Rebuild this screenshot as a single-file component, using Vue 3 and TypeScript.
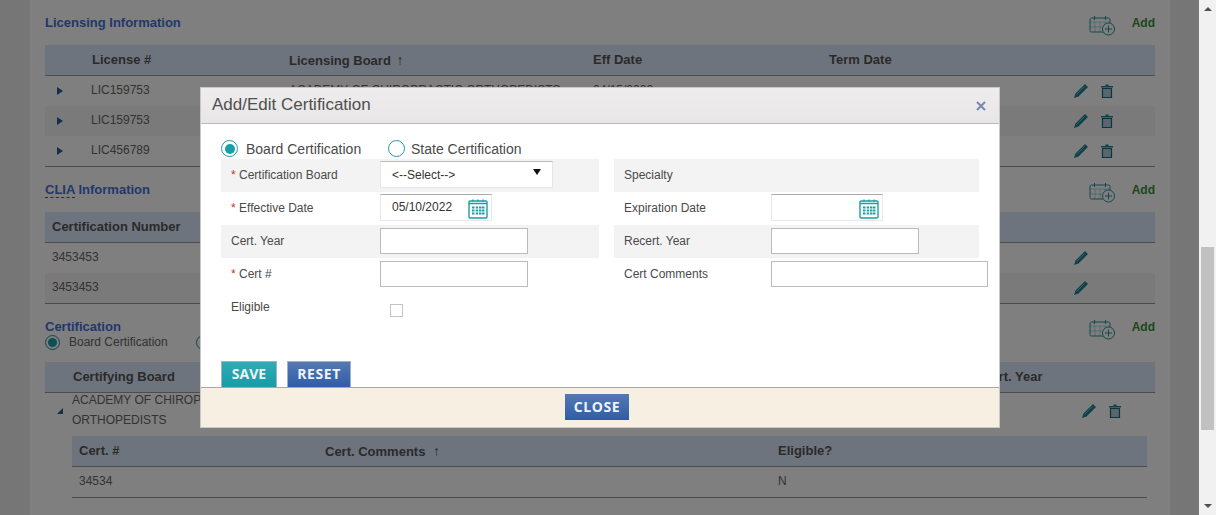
<script setup lang="ts">
const licenses = ['LIC159753', 'LIC159753', 'LIC456789']
const cliaNumbers = ['3453453', '3453453']
</script>

<template>
  <div class="shell">
    <div class="viewport">
      <main class="card">
        <section class="sec first">
          <div class="sec-head">
            <h2>Licensing Information</h2>
            <div class="add">
              <svg class="cal-add" viewBox="0 0 27 21" fill="none">
                <path d="M14 17H2.500A1.500 1.500 0 0 1 1 15.500V4.500A1.500 1.500 0 0 1 2.500 3h17A1.500 1.500 0 0 1 21 4.500V8" />
                <path d="M5.500 1v4M16.500 1v4" />
                <path class="grid" d="M1 7h20M6 7v10M11 7v10M16 7v2M1 12h12" />
                <circle cx="19.500" cy="14" r="6" />
                <path d="M19.500 10.500v7M16 14h7" />
              </svg>
              <span>Add</span>
            </div>
          </div>
          <div class="thead lic">
            <span>License #</span>
            <span>Licensing Board <i class="sort">&#8593;</i></span>
            <span>Eff Date</span>
            <span>Term Date</span>
          </div>
          <div v-for="(l, i) in licenses" :key="i" class="trow lic" :class="{ alt: i === 1 }">
            <i class="tri"></i>
            <span class="lic-no">{{ l }}</span>
            <span>ACADEMY OF CHIROPRACTIC ORTHOPEDISTS</span>
            <span>04/15/2022</span>
            <span></span>
            <span class="acts">
              <svg class="pen" viewBox="0 0 16 16"><path d="M12 1l3 3-9.500 9.500L1 15l1.500-4.500z" /><path class="pen-hi" d="M3.500 11.500l8-8" /></svg>
              <svg class="bin" viewBox="0 0 12 14"><path class="bin-lid" d="M4.500.500h3V2H12v1.500H0V2h4.500z" /><path class="bin-body" d="M1.500 4.500h9v9h-9z" /></svg>
            </span>
          </div>
          <div class="rule"></div>
        </section>

        <section class="sec clia">
          <div class="sec-head">
            <h2><abbr>CLIA</abbr> Information</h2>
            <div class="add">
              <svg class="cal-add" viewBox="0 0 27 21" fill="none">
                <path d="M14 17H2.500A1.500 1.500 0 0 1 1 15.500V4.500A1.500 1.500 0 0 1 2.500 3h17A1.500 1.500 0 0 1 21 4.500V8" />
                <path d="M5.500 1v4M16.500 1v4" />
                <path class="grid" d="M1 7h20M6 7v10M11 7v10M16 7v2M1 12h12" />
                <circle cx="19.500" cy="14" r="6" />
                <path d="M19.500 10.500v7M16 14h7" />
              </svg>
              <span>Add</span>
            </div>
          </div>
          <div class="thead clia-cols"><span>Certification Number</span></div>
          <div v-for="(n, i) in cliaNumbers" :key="i" class="trow clia-cols" :class="{ alt: i === 1 }">
            <span>{{ n }}</span>
            <span class="acts">
              <svg class="pen" viewBox="0 0 16 16"><path d="M12 1l3 3-9.500 9.500L1 15l1.500-4.500z" /><path class="pen-hi" d="M3.500 11.500l8-8" /></svg>
            </span>
          </div>
          <div class="rule"></div>
        </section>

        <section class="sec cert">
          <div class="sec-head short">
            <h2>Certification</h2>
            <div class="add">
              <svg class="cal-add" viewBox="0 0 27 21" fill="none">
                <path d="M14 17H2.500A1.500 1.500 0 0 1 1 15.500V4.500A1.500 1.500 0 0 1 2.500 3h17A1.500 1.500 0 0 1 21 4.500V8" />
                <path d="M5.500 1v4M16.500 1v4" />
                <path class="grid" d="M1 7h20M6 7v10M11 7v10M16 7v2M1 12h12" />
                <circle cx="19.500" cy="14" r="6" />
                <path d="M19.500 10.500v7M16 14h7" />
              </svg>
              <span>Add</span>
            </div>
          </div>
          <div class="bg-radios">
            <span class="radio on"></span><span class="bg-label">Board Certification</span>
            <span class="radio second"></span>
          </div>
          <div class="thead cert-cols">
            <span>Certifying Board</span>
            <span class="year">Cert. Year</span>
          </div>
          <div class="trow cert-cols tall">
            <i class="tri down"></i>
            <span class="board">ACADEMY OF CHIROPRACTIC<br />ORTHOPEDISTS</span>
            <span class="acts">
              <svg class="pen" viewBox="0 0 16 16"><path d="M12 1l3 3-9.500 9.500L1 15l1.500-4.500z" /><path class="pen-hi" d="M3.500 11.500l8-8" /></svg>
              <svg class="bin" viewBox="0 0 12 14"><path class="bin-lid" d="M4.500.500h3V2H12v1.500H0V2h4.500z" /><path class="bin-body" d="M1.500 4.500h9v9h-9z" /></svg>
            </span>
          </div>
          <div class="sub">
            <div class="thead sub-cols">
              <span>Cert. #</span>
              <span>Cert. Comments <i class="sort wide-sort">&#8593;</i></span>
              <span>Eligible?</span>
            </div>
            <div class="trow sub-cols">
              <span>34534</span>
              <span></span>
              <span>N</span>
            </div>
            <div class="rule"></div>
          </div>
        </section>
      </main>

      <div class="backdrop"></div>

      <div class="modal">
        <header class="m-head">
          <span>Add/Edit Certification</span>
          <svg class="x" viewBox="0 0 10 10"><path d="M1 1l8 8M9 1l-8 8" /></svg>
        </header>
        <div class="m-body">
          <div class="type-row">
            <label class="type first-type"><span class="radio on"></span>Board Certification</label>
            <label class="type"><span class="radio"></span>State Certification</label>
          </div>
          <div class="form">
            <div class="field band">
              <label><em>*</em> Certification Board</label>
              <div class="select">&lt;--Select--&gt;<i></i></div>
            </div>
            <div class="field band right"><label>Specialty</label></div>

            <div class="field">
              <label><em>*</em> Effective Date</label>
              <div class="date">
                <span>05/10/2022</span>
                <svg viewBox="0 0 20 20" fill="none" class="cal">
                  <rect x="1" y="2" width="18" height="17" rx="1" />
                  <path d="M1 4.500h18M5 .500v2M10 .500v2M15 .500v2" />
                  <path class="dots" d="M4 8.500h2.500M7.700 8.500h2.500M11 8.500h2.500M14 8.500h2.500M4 11.500h2.500M7.700 11.500h2.500M11 11.500h2.500M14 11.500h2.500M4 14.500h2.500M7.700 14.500h2.500M11 14.500h2.500M14 14.500h2.500" />
                </svg>
              </div>
            </div>
            <div class="field right">
              <label>Expiration Date</label>
              <div class="date">
                <span></span>
                <svg viewBox="0 0 20 20" fill="none" class="cal">
                  <rect x="1" y="2" width="18" height="17" rx="1" />
                  <path d="M1 4.500h18M5 .500v2M10 .500v2M15 .500v2" />
                  <path class="dots" d="M4 8.500h2.500M7.700 8.500h2.500M11 8.500h2.500M14 8.500h2.500M4 11.500h2.500M7.700 11.500h2.500M11 11.500h2.500M14 11.500h2.500M4 14.500h2.500M7.700 14.500h2.500M11 14.500h2.500M14 14.500h2.500" />
                </svg>
              </div>
            </div>

            <div class="field band"><label>Cert. Year</label><div class="input"></div></div>
            <div class="field band right"><label>Recert. Year</label><div class="input"></div></div>

            <div class="field"><label><em>*</em> Cert #</label><div class="input"></div></div>
            <div class="field right"><label>Cert Comments</label><div class="input wide"></div></div>

            <div class="field top"><label>Eligible</label><span class="check"></span></div>
            <div class="field right"></div>
          </div>
          <div class="btns">
            <button class="btn teal" type="button">SAVE</button>
            <button class="btn blue" type="button">RESET</button>
          </div>
        </div>
        <footer class="m-foot">
          <button class="btn blue close" type="button">CLOSE</button>
        </footer>
      </div>
    </div>

    <aside class="scrollbar">
      <i class="arrow up"></i>
      <div class="thumb"></div>
      <i class="arrow dn"></i>
    </aside>
  </div>
</template>

<style>
html, body { margin: 0; overflow: hidden; }
</style>

<style scoped>
.shell { display: flex; width: 1216px; height: 515px; overflow: hidden; font-family: "Liberation Sans", Arial, sans-serif; }
.viewport { position: relative; width: 1199px; height: 515px; overflow: hidden; background: #ececec; }
.card { width: 1140px; height: 515px; margin-left: 30px; padding: 0 15px; box-sizing: border-box; background: #fff; }

.sec-head { display: flex; justify-content: space-between; align-items: flex-start; height: 45px; padding-top: 15px; box-sizing: border-box; }
h2 { margin: 0; font-size: 13px; line-height: 16px; font-weight: 700; color: #4470d8; }
abbr { border-bottom: 1px dashed #555; }
.add { display: flex; gap: 16px; font-size: 12px; font-weight: 700; color: #3a8f3a; line-height: 16px; }
.cal-add { width: 27px; height: 21px; stroke: #23939c; stroke-width: 1; }
.grid { stroke-width: .6; stroke-opacity: .55; }

.thead { height: 30px; background: #dde8fa; color: #555; font-size: 13px; font-weight: 700; line-height: 30px; border-bottom: 1px solid #999; display: grid; }
.thead span { white-space: nowrap; }
.sort { font-style: normal; font-weight: 700; font-size: 14px; margin-left: 2px; }
.wide-sort { margin-left: 4px; }
.trow { height: 30px; display: grid; align-items: center; font-size: 12px; color: #666; background: #fff; position: relative; }
.trow span { white-space: nowrap; padding-bottom: 2px; }
.trow span.acts { padding-bottom: 0; }
.trow.alt { background: #f5f5f5; }
.rule { height: 1px; background: #999; }

.thead.lic { grid-template-columns: 244px 304px 236px 1fr; }
.thead.lic span:first-child { padding-left: 47px; }
.trow.lic { grid-template-columns: 46px 198px 304px 236px 1fr 82px; }
.tri { display: block; width: 0; height: 0; margin-left: 12px; border-left: 6px solid #2a5c96; border-top: 4px solid transparent; border-bottom: 4px solid transparent; }
.tri.down { border: 0; border-bottom: 6px solid #2a5c96; border-left: 6px solid transparent; }

.acts { display: flex; align-items: center; gap: 12px; }
.pen { width: 16px; height: 16px; fill: #1d8490; }
.pen-hi { stroke: #7cc4cc; stroke-width: .9; fill: none; }
.bin { width: 12px; height: 14px; }
.bin-lid { fill: #1d8490; }
.bin-body { fill: #b4cadb; stroke: #146f7c; stroke-width: 1.200; }

.sec.clia { padding-top: 6px; }
.sec.clia .sec-head { height: 39px; padding-top: 9px; }
.clia-cols { grid-template-columns: 1028px 82px; padding-left: 7px; }
.trow.clia-cols { grid-template-columns: 1021px 82px; }

.sec.cert .sec-head { padding-top: 15px; height: 29px; }
.bg-radios { display: flex; align-items: center; height: 18px; margin-bottom: 11px; font-size: 12px; color: #666; position: relative; }
.bg-radios .radio { width: 15px; height: 15px; border-color: #1f8a94; }
.bg-radios .radio.on::after { inset: 2px; }
.bg-label { margin-left: 9px; }
.second { margin-left: 28px; }

.thead.cert-cols { grid-template-columns: 28px 1fr; }
.thead.cert-cols span:first-child { grid-column: 2; grid-row: 1; }
.thead.cert-cols .year { grid-column: 2; grid-row: 1; padding-left: 909px; }
.trow.tall { height: 40px; grid-template-columns: 27px 1fr 74px; grid-template-rows: 36px; line-height: 20px; }
.trow.tall .board { padding-bottom: 0; align-self: start; margin-top: -3px; }

.sub { margin: 3px 8px 0 27px; }
.sub-cols { grid-template-columns: 246px 453px 1fr; padding-left: 7px; }

.backdrop { position: absolute; inset: 0; background: rgba(0, 0, 0, .5); }

.radio { display: inline-block; box-sizing: border-box; width: 17px; height: 17px; border: 1.500px solid #1f9aa6; border-radius: 50%; background: #fff; position: relative; flex: none; }
.radio.on::after { content: ""; position: absolute; inset: 2.500px; background: #17a0a8; border-radius: 50%; }

.modal { position: absolute; left: 200px; top: 87px; width: 800px; height: 341px; box-sizing: border-box; border: 1px solid #c8c8c8; background: #fff; display: flex; flex-direction: column; }
.m-head { flex: none; height: 36px; box-sizing: border-box; display: flex; align-items: center; justify-content: space-between; padding: 0 13px 2px 11px; background: linear-gradient(#eeecec, #e8e6e6); border-bottom: 1px solid #bbb; font-size: 17px; color: #4f4f4f; }
.x { width: 10px; height: 10px; stroke: #7a88ae; stroke-width: 2; fill: none; margin-top: 2px; }
.m-body { flex: 1; padding: 0 0 0 20px; position: relative; }
.type-row { display: flex; align-items: center; height: 35px; padding-top: 14px; box-sizing: border-box; font-size: 14px; color: #4a4a4a; }
.type { display: flex; align-items: center; gap: 6px; }
.first-type { width: 167px; gap: 8px; }
.form { display: grid; grid-template-columns: 378px 365px; column-gap: 15px; grid-auto-rows: 33px; }
.field { display: flex; align-items: center; padding-bottom: 2px; box-sizing: border-box; font-size: 12px; color: #4a4a4a; }
.field.band { background: #f3f3f3; }
.field.top { align-items: flex-start; padding: 9px 0 0; }
.field label { width: 149px; padding-left: 10px; flex: none; }
.field.right label { width: 147px; }
em { color: #c0392b; font-style: normal; }
.select { position: relative; width: 173px; height: 27px; box-sizing: border-box; background: #fff; border: 1px solid #e6e6e6; border-top-color: #bbb; padding-left: 11px; line-height: 27px; font-size: 12px; color: #333; }
.select i { position: absolute; right: 11px; top: 7px; border-left: 4px solid transparent; border-right: 4px solid transparent; border-top: 6px solid #111; }
.date { width: 112px; height: 27px; box-sizing: border-box; display: flex; align-items: center; justify-content: space-between; border: 1px solid #e8e8e8; border-top-color: #aaa; padding: 0 3px 0 11px; font-size: 12px; color: #333; background: #fff; }
.date span { margin-top: -2px; }
.cal { width: 20px; height: 20px; stroke: #19a0a8; stroke-width: 1.400; margin-top: 2px; }
.dots { stroke-width: 2; }
.input { width: 148px; height: 26px; box-sizing: border-box; border: 1px solid #bbb; background: #fff; }
.input.wide { width: 217px; flex: none; }
.check { display: block; width: 13px; height: 13px; box-sizing: border-box; border: 1px solid #c4c4c4; background: #fff; margin: 4px 0 0 10px; }
.btns { display: flex; gap: 10px; position: absolute; left: 20px; bottom: 0; }
.btn { border: 1px solid #9db4c8; border-bottom: 0; padding: 0 0 2px; height: 26px; font-family: "Open Sans", "Liberation Sans", sans-serif; font-size: 14px; font-weight: 700; color: #eef3f8; }
.teal { width: 56px; background: linear-gradient(#33a9b3, #149ea8); }
.blue { width: 64px; background: linear-gradient(#5478b4, #2f5ea6); letter-spacing: .6px; }
.m-foot { flex: none; height: 40px; box-sizing: border-box; display: flex; justify-content: center; align-items: center; background: #f7f0e2; border-top: 1px solid #a8a8a8; }
.close { height: 26px; width: 64px; border: 0; margin: -1px 6px 0 0; }

.scrollbar { width: 17px; height: 515px; background: #f1f1f1; display: flex; flex-direction: column; align-items: center; flex: none; }
.arrow { display: block; width: 0; height: 0; border-left: 4px solid transparent; border-right: 4px solid transparent; }
.up { border-bottom: 4px solid #505050; margin-top: 7px; }
.thumb { width: 13px; height: 183px; background: #c1c1c1; margin-top: 236px; }
.dn { border-top: 4px solid #505050; margin-top: 74px; }
</style>
